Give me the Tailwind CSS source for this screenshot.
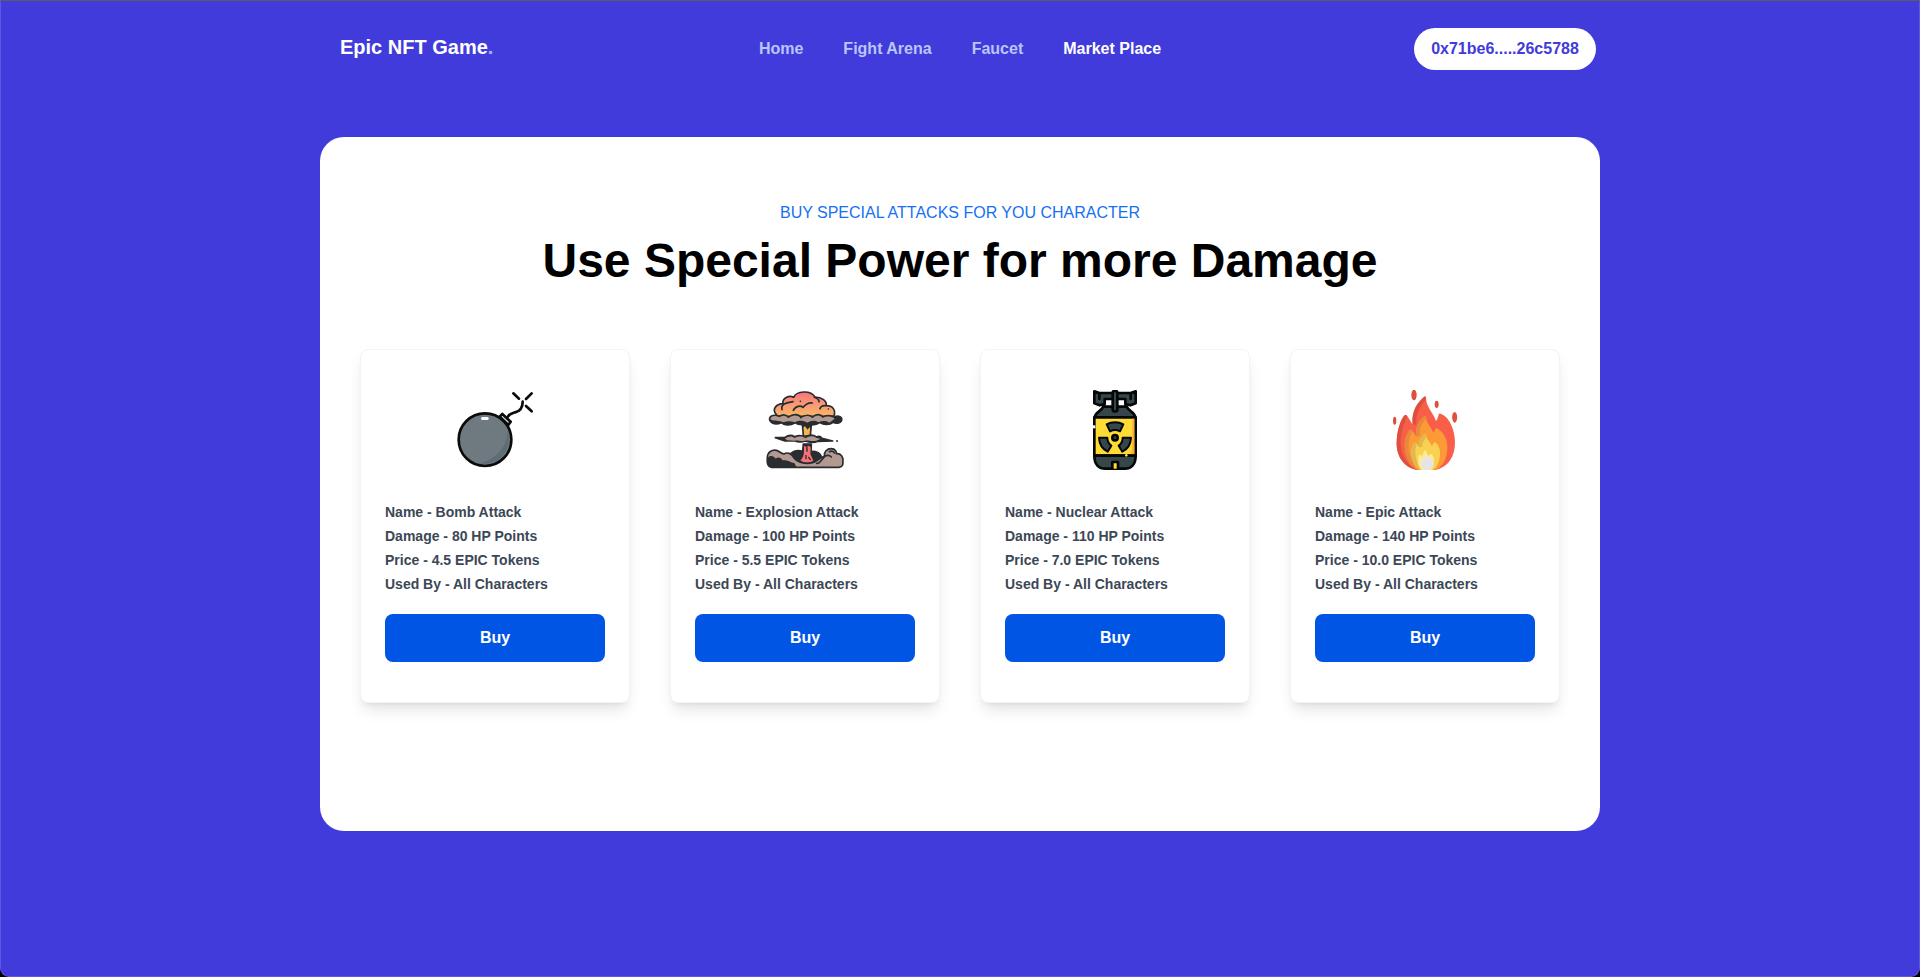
<!DOCTYPE html>
<html lang="en">
<head>
<meta charset="utf-8">
<title>Epic NFT Game</title>
<script src="https://cdn.jsdelivr.net/npm/@tailwindcss/browser@4"></script>
</head>
<body class="bg-black font-['Liberation_Sans',Arial,sans-serif]">
<div class="h-[977px] overflow-hidden rounded-b-[9px] border border-t-[#5b5b62] border-x-[#5d58e0] border-b-[#5d58e0] bg-[#413bdb]">
  <div class="mx-auto w-[1280px]">
    <header class="flex h-[95px] items-center justify-between pl-5 pr-1">
      <div class="w-[270px] pb-1 text-xl font-bold text-white"><span class="inline-block">Epic NFT Game<span class="text-indigo-300">.</span></span></div>
      <nav class="flex gap-10 text-base font-bold text-[#b9c6fb]">
        <a>Home</a><a>Fight Arena</a><a>Faucet</a><a class="text-white">Market Place</a>
      </nav>
      <div class="flex w-[286px] justify-end">
        <button class="h-[42px] w-[182px] rounded-full bg-white text-base font-bold text-[#413bdb]">0x71be6.....26c5788</button>
      </div>
    </header>
    <main class="mt-[41px] h-[694px] rounded-3xl bg-white px-10 pt-16">
      <p class="text-center text-base text-[#1570f5]">BUY SPECIAL ATTACKS FOR YOU CHARACTER</p>
      <h1 class="mt-2 text-center text-5xl font-bold leading-[56px] text-black">Use Special Power for more Damage</h1>
      <div class="mt-[60px] grid grid-cols-4 gap-10">

        <section class="h-[354px] rounded-lg border border-gray-100 bg-white px-6 pt-10 shadow-lg">
          <svg class="mx-auto size-20" viewBox="45 45 240 240" fill="none" stroke="#0b0b0c" stroke-width="8" stroke-linecap="round" stroke-linejoin="round">
            <circle cx="135" cy="194" r="79" fill="#6f7a80"/>
            <path d="M203 165C202 218 168 252 118 265C165 274 207 240 206 194C206 182 205 172 203 165Z" fill="#5f6c73" stroke="none"/>
            <rect x="123" y="126" width="23" height="9" rx="4.500" fill="#fff" stroke="none"/>
            <path d="M179 125L187 117L212 140L205 150Z" fill="#cfe0e2"/>
            <path d="M203 126C208 116 216 115 225 112C239 109 248 98 248 80"/>
            <path d="M220 55L237 71M275 55L258 72M258 93L275 109"/>
          </svg>
          <div class="mt-[30px] text-sm font-bold leading-6 text-[#3c4755]">
            <p>Name - Bomb Attack</p><p>Damage - 80 HP Points</p><p>Price - 4.5 EPIC Tokens</p><p>Used By - All Characters</p>
          </div>
          <button class="mt-[18px] h-12 w-full rounded-lg bg-[#0055e5] text-base font-bold text-white">Buy</button>
        </section>

        <section class="h-[354px] rounded-lg border border-gray-100 bg-white px-6 pt-10 shadow-lg">
          <svg class="mx-auto size-20" viewBox="45 45 240 240" fill="none" stroke="#292c30" stroke-width="5" stroke-linecap="round" stroke-linejoin="round">
            <defs>
              <linearGradient id="cloud" x1="0" y1="0" x2="0" y2="1"><stop offset="0" stop-color="#fa7278"/><stop offset=".45" stop-color="#f79676"/><stop offset="1" stop-color="#fbb765"/></linearGradient>
            </defs>
            <path d="M157 145H184L181 183H160Z" fill="#f7b54f"/>
            <path d="M157 145H184V164L178 157L173 164L165 154L158 158Z" fill="#292c30" stroke="none"/>
            <path d="M79 119C65 103 78 87 99 86C96 69 117 60 131 67C139 48 181 44 195 66C216 67 231 77 229 92C249 91 259 108 251 124H79Z" fill="url(#cloud)"/>
            <path d="M103 87C113 81 122 82 129 80M102 87C96 91 94 96 96 104M130 106C137 91 153 92 159 97C167 88 177 82 187 84M193 67C202 70 207 74 207 80M228 92C218 91 212 94 210 101"/>
            <circle cx="151" cy="79" r="2.500" fill="#292c30" stroke="none"/><circle cx="235" cy="102" r="2.500" fill="#292c30" stroke="none"/>
            <path d="M59 135C56 120 78 118 88 124C98 118 108 119 115 127C130 115 147 117 153 128C165 118 180 119 187 127C199 115 212 117 219 126C234 119 249 123 253 126C264 121 277 124 275 136C272 147 255 145 249 142C239 151 220 150 210 143C194 153 178 151 170 145C157 151 143 149 136 143C117 154 101 150 95 143C80 149 66 147 59 135Z" fill="#292c30"/>
            <path d="M61 133C62 120 80 121 88 127C98 120 109 121 115 130C130 117 146 120 152 131C165 120 179 121 187 130C199 118 211 119 218 129C233 121 248 125 254 131L238 143C225 136 216 138 205 142C193 134 181 138 172 143C159 136 146 136 135 142C121 137 110 138 101 142C88 136 72 140 61 133Z" fill="#b39a91" stroke="none"/>
            <path d="M76 188L105 187C116 179 127 181 134 185C146 180 158 181 166 187C178 178 191 180 199 186C207 182 213 185 216 190L248 198L202 199C190 206 176 201 166 198C152 203 143 202 134 197L105 198Z" fill="#292c30"/>
            <path d="M105 191C115 182 127 183 134 189C147 183 159 183 166 190C178 181 192 182 199 189L212 191L199 197C184 200 174 195 165 197C151 200 145 195 133 197L112 196Z" fill="#b39a91" stroke="none"/>
            <circle cx="261" cy="198" r="3" fill="#292c30" stroke="none"/>
            <path d="M119 239C131 226 145 225 158 229L160 207H184L183 228C203 228 213 238 216 248L205 266H134Z" fill="#292c30"/>
            <path d="M162 212L169 216L176 212L182 217L181 237L190 257C180 265 160 265 151 256C159 250 162 239 162 228Z" fill="#f87178" stroke="none"/>
            <path d="M171 217V229M168 241V251M176 247L181 254" stroke-width="4"/>
            <path d="M64 277C49 274 51 257 52 248C52 231 67 223 79 226C87 228 93 236 102 237C114 229 127 239 130 246C141 263 167 268 188 263C200 260 207 250 223 244C221 230 231 221 244 221C257 221 260 232 259 236C273 234 279 246 279 257C279 268 279 276 267 277Z" fill="#b39a91"/>
            <path d="M64 277C51 273 52 258 53 249C58 239 72 242 77 251C84 244 94 248 98 256C115 254 121 263 133 264L140 277Z" fill="#292c30" stroke="none"/>
            <path d="M200 265C208 269 213 256 224 244C231 240 239 241 244 246M238 230C245 226 251 229 253 234"/>
          </svg>
          <div class="mt-[30px] text-sm font-bold leading-6 text-[#3c4755]">
            <p>Name - Explosion Attack</p><p>Damage - 100 HP Points</p><p>Price - 5.5 EPIC Tokens</p><p>Used By - All Characters</p>
          </div>
          <button class="mt-[18px] h-12 w-full rounded-lg bg-[#0055e5] text-base font-bold text-white">Buy</button>
        </section>

        <section class="h-[354px] rounded-lg border border-gray-100 bg-white px-6 pt-10 shadow-lg">
          <svg class="mx-auto size-20" viewBox="45 45 240 240" fill="none" stroke="#050606" stroke-width="8" stroke-linecap="round" stroke-linejoin="round">
            <path d="M132 70V96M198 70V96" stroke-width="9"/>
            <path d="M103 49L118 54H212L227 49V85L211 91L196 87V72H134V87L119 91L103 85Z" fill="#36474b"/>
            <path d="M118 57V72M212 57V72"/>
            <path d="M104 127C106 111 122 111 130 95H200C208 111 224 111 226 127Z" fill="#36474b"/>
            <path d="M103 127H227V242H103Z" fill="#ffdc35"/>
            <path d="M217 131H223V238H210C216 230 217 219 217 208Z" fill="#ffad35" stroke="none"/>
            <path d="M103 242H227C227 269 213 281 194 281H136C117 281 103 269 103 242Z" fill="#36474b"/>
            <path d="M157 281V261H174V281" fill="#ffdc35"/>
            <rect x="158" y="48" width="14" height="61" rx="5" fill="#36474b"/>
            <path d="M140 148C154 140 176 140 190 148L180 169C170 164 160 164 150 169ZM117 188H142C142 199 147 207 154 212L143 230C128 223 118 207 117 188ZM213 188H188C188 199 183 207 176 212L187 230C202 223 212 207 213 188Z" fill="#36474b" stroke-width="6"/>
            <circle cx="165" cy="188" r="8" fill="#36474b"/>
            <path d="M97 151H106V160H97Z" fill="#fff" stroke="none"/>
            <circle cx="199" cy="241" r="4" fill="#ffdc35" stroke="none"/>
          </svg>
          <div class="mt-[30px] text-sm font-bold leading-6 text-[#3c4755]">
            <p>Name - Nuclear Attack</p><p>Damage - 110 HP Points</p><p>Price - 7.0 EPIC Tokens</p><p>Used By - All Characters</p>
          </div>
          <button class="mt-[18px] h-12 w-full rounded-lg bg-[#0055e5] text-base font-bold text-white">Buy</button>
        </section>

        <section class="h-[354px] rounded-lg border border-gray-100 bg-white px-6 pt-10 shadow-lg">
          <svg class="mx-auto size-20" viewBox="45 45 240 240">
            <g fill="#de4f40"><ellipse cx="132" cy="60" rx="8" ry="16"/><ellipse cx="200" cy="88" rx="6" ry="11"/><ellipse cx="254" cy="127" rx="7.500" ry="16"/><ellipse cx="74" cy="137" rx="5" ry="12"/></g>
            <path d="M144 285C99 279 80 239 80 206C80 168 92 133 104 121Q107 118 110 121C116 128 121 138 128 149C123 107 145 79 163 65Q167 62 168 67C168 97 189 112 198 138C203 132 204 126 206 118Q208 114 214 117C240 128 255 167 255 202C255 245 235 278 195 285Z" fill="#f95f48"/>
            <path d="M144 285C99 279 80 239 80 206C80 168 92 133 104 121Q107 118 112 124C96 159 88 189 94 223C101 254 119 275 144 285ZM128 149C123 107 145 79 163 65Q167 62 167 75C144 101 137 125 139 149Z" fill="#df4f40"/>
            <path d="M144 285C117 274 104 240 104 210C104 189 112 171 120 164Q123 161 126 165L138 184C136 151 150 132 164 123Q167 121 168 127C170 147 184 157 191 174L196 163Q198 158 203 161C222 172 232 193 232 216C232 250 218 277 195 285Z" fill="#fd9a38"/>
            <path d="M146 285C117 274 104 240 104 210C104 189 112 171 120 164Q123 161 128 168C114 191 114 212 119 235C125 262 134 277 146 285ZM138 184C136 151 150 132 164 123Q167 121 167 133C152 149 148 163 150 184Z" fill="#e68a3c"/>
            <path d="M150 285C130 273 124 246 124 227C124 216 130 207 135 203Q138 201 140 205L147 216C145 196 155 184 164 178Q167 176 168 181C170 194 180 200 186 213L191 203Q193 200 197 203C208 211 211 227 210 240C208 263 199 280 188 285Z" fill="#f8d153"/>
            <path d="M152 285C130 273 124 246 124 227C124 216 130 207 135 203Q138 201 141 208C131 224 136 257 152 285ZM147 216C145 196 155 184 164 178Q167 176 167 189C160 198 156 207 157 216Z" fill="#deb94d"/>
            <path d="M156 285C144 274 143 259 145 246C146 240 150 237 153 240L158 246C158 235 162 229 166 225Q168 224 168 229C170 237 174 239 176 244L181 236C190 238 192 250 191 261C190 274 186 282 182 285Z" fill="#ffeb95"/>
            <ellipse cx="172" cy="266" rx="19" ry="21" fill="#e6e5e4"/>
          </svg>
          <div class="mt-[30px] text-sm font-bold leading-6 text-[#3c4755]">
            <p>Name - Epic Attack</p><p>Damage - 140 HP Points</p><p>Price - 10.0 EPIC Tokens</p><p>Used By - All Characters</p>
          </div>
          <button class="mt-[18px] h-12 w-full rounded-lg bg-[#0055e5] text-base font-bold text-white">Buy</button>
        </section>

      </div>
    </main>
  </div>
</div>
</body>
</html>
